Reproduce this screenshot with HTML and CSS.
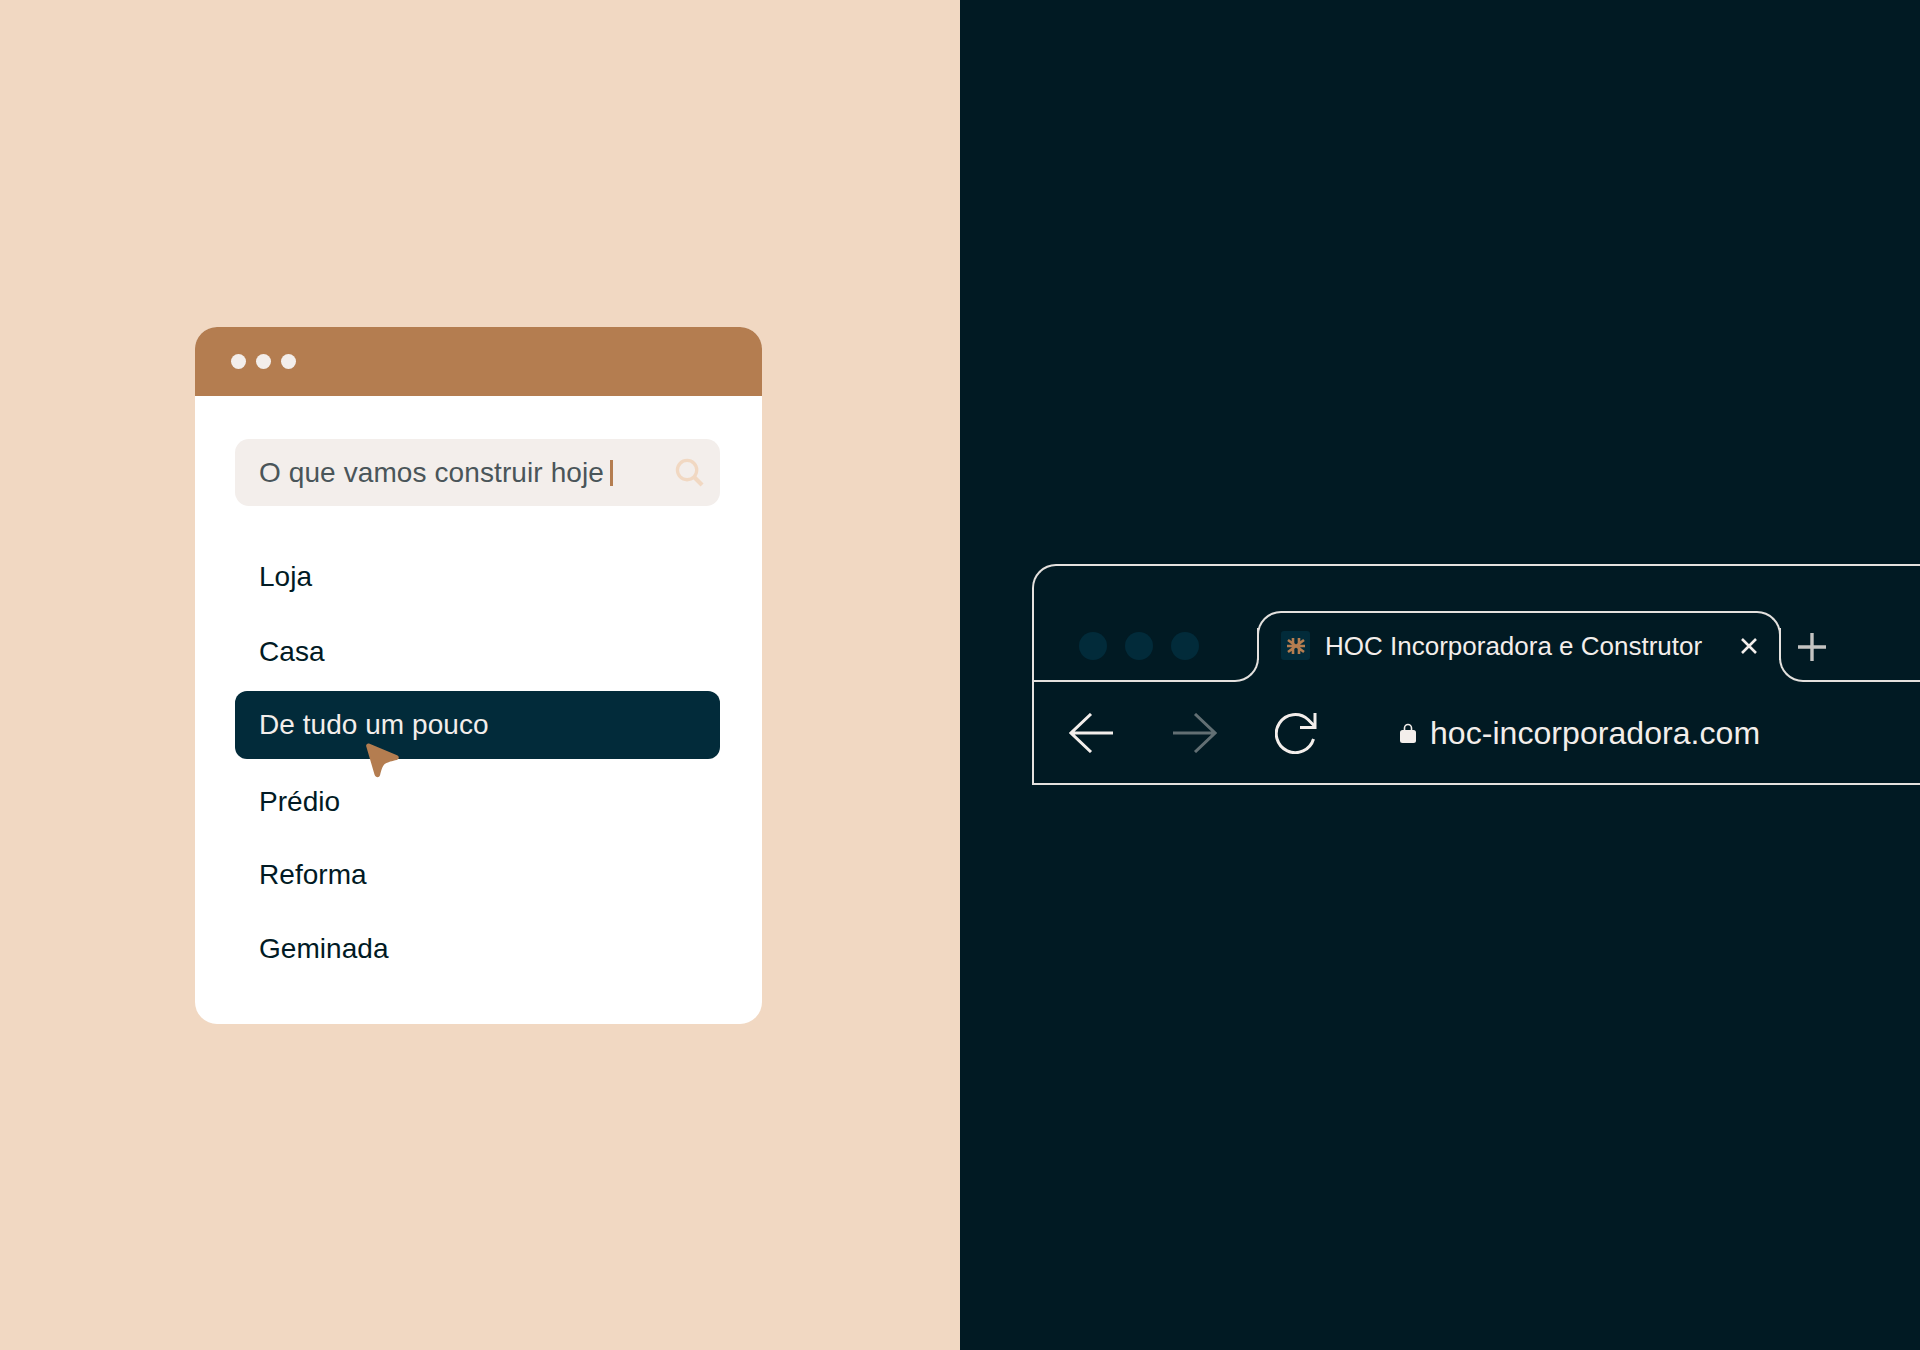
FILE: index.html
```html
<!DOCTYPE html>
<html lang="pt">
<head>
    <meta charset="UTF-8">
    <title>HOC Incorporadora e Construtor</title>
    <link rel="stylesheet" href="styles.css">
</head>
<body>
    <div class="split">
        <section class="panel-light">
            <div class="card">
                <div class="card-header">
                    <span class="card-dot"></span>
                    <span class="card-dot"></span>
                    <span class="card-dot"></span>
                </div>
                <div class="card-body">
                    <div class="search">
                        <span class="search-text">O que vamos construir hoje</span>
                        <span class="caret"></span>
                        <svg class="search-icon" viewBox="0 0 30 30" fill="none" stroke="#f1d8c2" stroke-width="3.4">
                            <circle cx="12.5" cy="12.5" r="10"/>
                            <path d="M20 20l8 8" stroke-width="4.4"/>
                        </svg>
                    </div>
                    <ul class="menu">
                        <li class="menu-item">Loja</li>
                        <li class="menu-item">Casa</li>
                        <li class="menu-item active">De tudo um pouco</li>
                        <li class="menu-item">Prédio</li>
                        <li class="menu-item">Reforma</li>
                        <li class="menu-item">Geminada</li>
                    </ul>
                </div>
                <!-- cursor sits over the active row -->
                <svg class="pointer" viewBox="0 0 36 38">
                    <path d="M4 1.5C2.2 1 .8 2.6 1.2 4.2L9.5 32.5c1.2 3.6 4.6 3.600 5.600 .6 1-3.600 2-8.600 4.600-11 2.400-2.200 8-3.200 12-4.200 2.600-.8 2.800-3.600 .4-4.600z" fill="#b47d50"/>
                </svg>
            </div>
        </section>

        <section class="panel-dark">
            <div class="browser">
                <div class="tabstrip">
                    <div class="strip-left">
                        <span class="win-dot"></span>
                        <span class="win-dot"></span>
                        <span class="win-dot"></span>
                    </div>
                    <div class="tab">
                        <span class="favicon">
                            <svg viewBox="0 0 20 20" width="20" height="20" stroke="#b47d50" stroke-width="2.6">
                                <path d="M7 2v16M13 2v16M1 10h18M2 4l16 12M18 4L2 16"/>
                            </svg>
                        </span>
                        <span class="tab-title">HOC Incorporadora e Construtor</span>
                        <svg class="tab-close" viewBox="0 0 16 16" stroke="#f3eeeb" stroke-width="2.6">
                            <path d="M1 1l14 14M15 1L1 15"/>
                        </svg>
                    </div>
                    <div class="strip-right">
                        <svg class="tab-add" viewBox="0 0 28 28" stroke="#c4c4c2" stroke-width="3.4">
                            <path d="M14 0v28M0 14h28"/>
                        </svg>
                    </div>
                </div>
                <div class="toolbar">
                    <svg class="nav-back" viewBox="0 0 44 40" fill="none" stroke="#f3eeeb" stroke-width="3">
                        <path d="M44 20H2M22 1L2 20l20 19"/>
                    </svg>
                    <svg class="nav-forward" viewBox="0 0 44 40" fill="none" stroke="#f3eeeb" stroke-width="3">
                        <path d="M0 20h42M22 1l20 19-20 19"/>
                    </svg>
                    <svg class="nav-reload" viewBox="0 0 42 42" fill="none" stroke="#f3eeeb" stroke-width="3">
                        <path d="M38.500 27A19 19 0 1 1 33 7.500L39.500 14"/>
                        <path d="M40 1v14.500H25"/>
                    </svg>
                    <svg class="lock" viewBox="0 0 16 20">
                        <path d="M4.500 8V5a3.500 3.500 0 0 1 7 0v3" fill="none" stroke="#f3eeeb" stroke-width="1.600"/>
                        <rect y="7" width="16" height="13" rx="2.500" fill="#f3eeeb"/>
                    </svg>
                    <span class="url">hoc-incorporadora.com</span>
                </div>
            </div>
        </section>
    </div>
</body>
</html>
```

FILE: styles.css
```css
* {
    box-sizing: border-box;
}
html, body {
    margin: 0;
    height: 100%;
}
body {
    font-family: 'Liberation Sans', Arial, sans-serif;
    overflow: hidden;
}
.split {
    display: grid;
    grid-template-columns: 960px 960px;
    height: 1350px;
}

/* left side */
.panel-light {
    background-color: #f1d8c2;
    padding: 327px 0 0 195px;
}
.card {
    position: relative;
    width: 567px;
    height: 697px;
    background: white;
    border-radius: 22px;
    overflow: hidden;
}
.card-header {
    display: flex;
    align-items: center;
    gap: 10px;
    height: 69px;
    padding: 0 0 0 36px;
    background-color: #b47d50;
}
.card-dot {
    width: 15px;
    height: 15px;
    border-radius: 50%;
    background-color: #f3eeeb;
}
.card-body {
    padding: 43px 42px 0 40px;
}
.search {
    display: flex;
    align-items: center;
    height: 67px;
    padding: 0 16px 0 24px;
    border-radius: 14px;
    background-color: #f3eeeb;
    color: #4a5559;
    font-size: 28px;
    letter-spacing: 0.1px;
}
.caret {
    width: 3px;
    height: 26px;
    margin-left: 6px;
    background-color: #b47d50;
}
.search-icon {
    width: 29px;
    height: 29px;
    margin-left: auto;
}
.menu {
    list-style: none;
    margin: 37px 0 0;
    padding: 0;
    display: flex;
    flex-direction: column;
    gap: 6px;
}
.menu-item {
    display: flex;
    align-items: center;
    height: 68px;
    padding-left: 24px;
    border-radius: 12px;
    color: #011a24;
    font-size: 28px;
    letter-spacing: 0.05px;
}
.menu-item:nth-child(2) {
    margin-top: 1px;
}
.menu-item:nth-child(3) {
    margin-top: -1px;
}
.menu-item:nth-child(4) {
    margin-top: 3px;
}
.menu-item:nth-child(5) {
    margin-top: -1px;
}
.menu-item.active {
    background-color: #022b3a;
    color: #f3eeeb;
}
.pointer {
    position: absolute;
    left: 170px;
    top: 415px;
    width: 36px;
    height: 38px;
}

/* right side */
.panel-dark {
    background-color: #011a23;
    padding: 564px 0 0 72px;
    overflow: hidden;
}
.browser {
    height: 221px;
    border: solid #e4e1de;
    border-width: 2px 0 2px 2px;
    border-top-left-radius: 24px;
}
.tabstrip {
    display: flex;
    height: 116px;
}
.strip-left {
    display: flex;
    gap: 18px;
    align-self: flex-end;
    width: 225px;
    height: 54px;
    padding: 4px 0 0 45px;
    border: solid #e4e1de;
    border-width: 0 2px 2px 0;
    border-bottom-right-radius: 24px;
}
.win-dot {
    width: 28px;
    height: 28px;
    border-radius: 50%;
    background-color: #022b3a;
}
.tab {
    display: flex;
    align-items: flex-start;
    align-self: flex-start;
    width: 524px;
    height: 49px;
    margin: 45px 0 0 -2px;
    padding: 18px 0 0 22px;
    border: solid #e4e1de;
    border-width: 2px 2px 0 2px;
    border-radius: 24px 24px 0 0;
    color: #f3eeeb;
}
.favicon {
    display: flex;
    align-items: center;
    justify-content: center;
    flex: none;
    width: 29px;
    height: 29px;
    border-radius: 3px;
    background-color: #022b3a;
}
.tab-title {
    margin: 1px 0 0 15px;
    font-size: 26px;
    line-height: 29px;
    white-space: nowrap;
}
.tab-close {
    flex: none;
    width: 16px;
    height: 16px;
    margin: 7px 0 0 39px;
}
.strip-right {
    flex: 1;
    align-self: flex-end;
    height: 54px;
    margin-left: -2px;
    padding: 0 0 0 17px;
    border: solid #e4e1de;
    border-width: 0 0 2px 2px;
    border-bottom-left-radius: 24px;
}
.tab-add {
    display: block;
    width: 28px;
    height: 28px;
    margin-top: 5px;
}
.toolbar {
    display: flex;
    align-items: center;
    height: 101px;
    padding-left: 35px;
}
.toolbar svg {
    flex: none;
}
.nav-back,
.nav-forward {
    width: 44px;
    height: 40px;
}
.nav-forward {
    margin-left: 60px;
    opacity: 0.4;
}
.nav-reload {
    width: 42px;
    height: 42px;
    margin-left: 58px;
}
.lock {
    width: 16px;
    height: 20px;
    margin-left: 83px;
}
.url {
    margin: 2px 0 0 14px;
    color: #f3eeeb;
    font-size: 32px;
    letter-spacing: 0.05px;
}
```
